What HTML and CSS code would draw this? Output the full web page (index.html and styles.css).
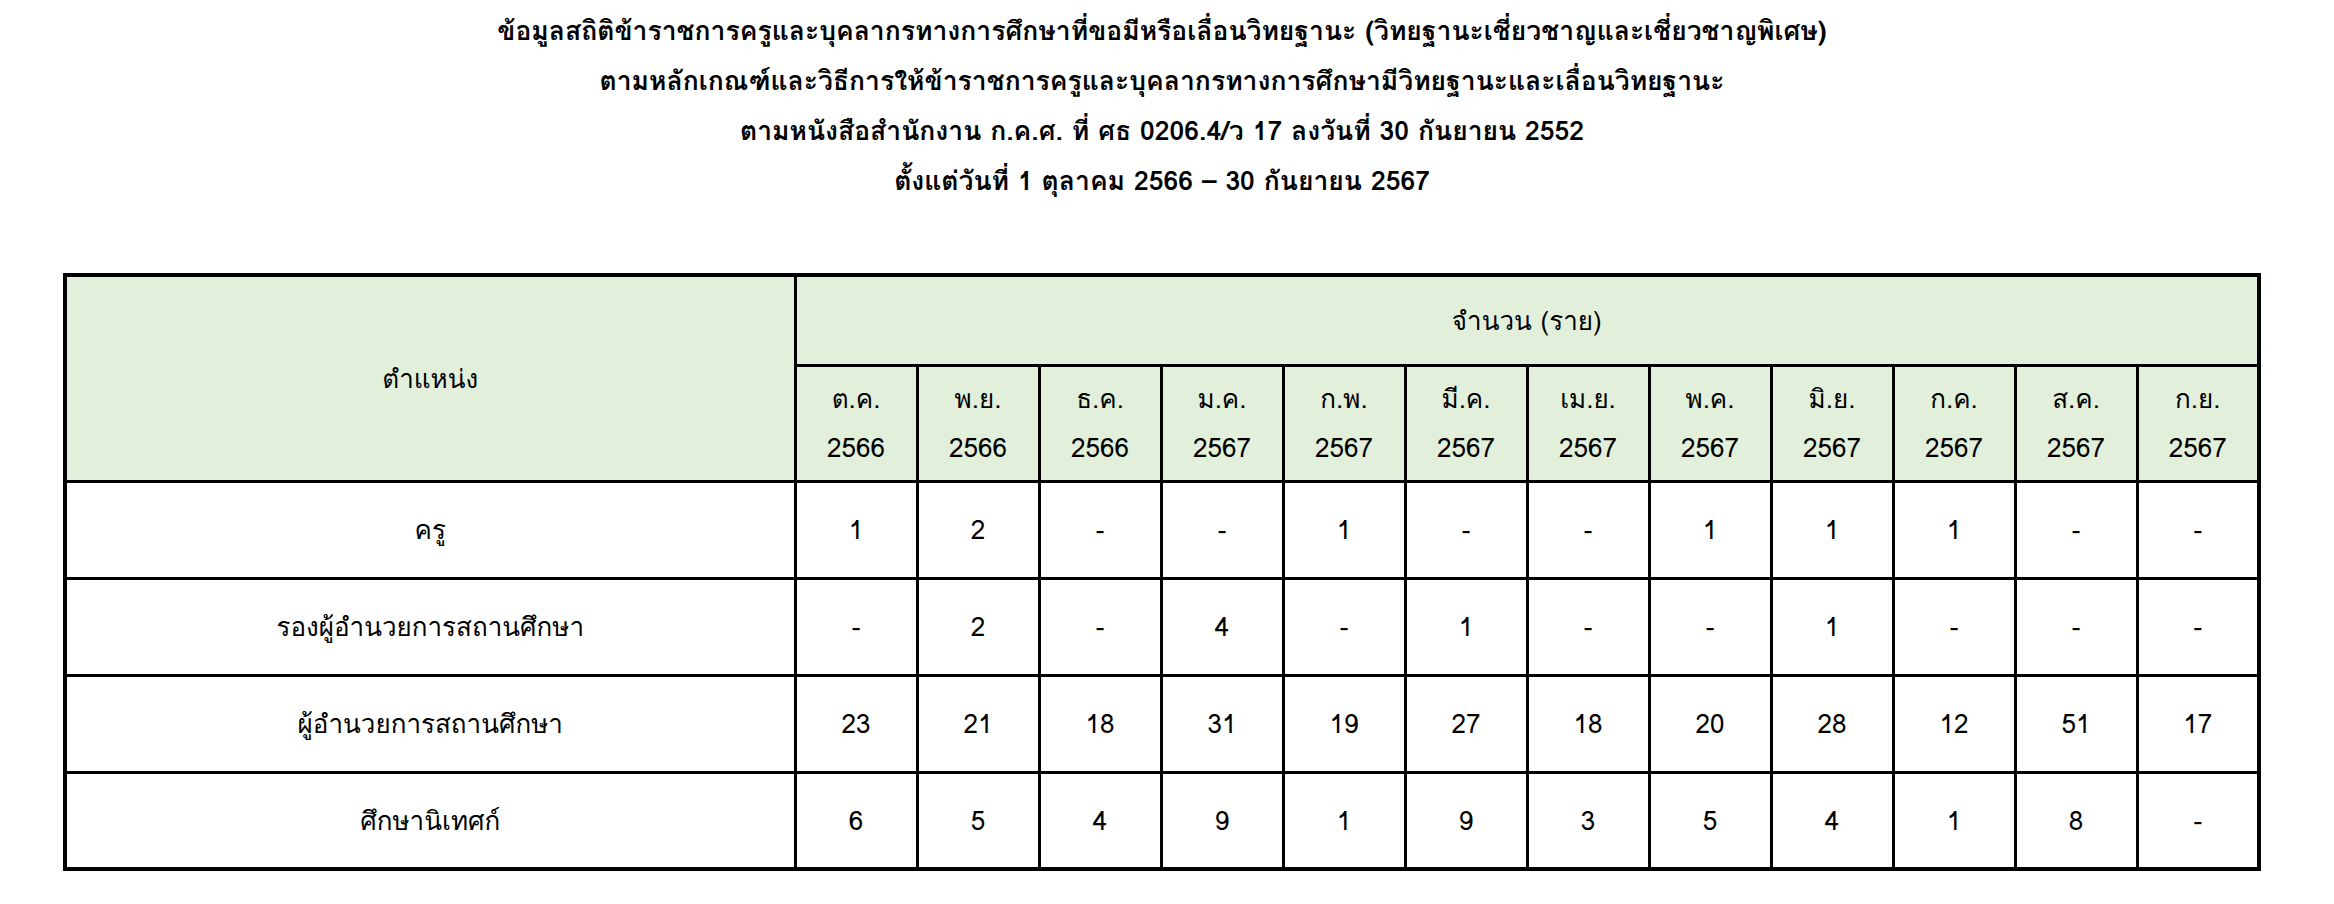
FILE: index.html
```html
<!DOCTYPE html>
<html lang="th">
<head>
<meta charset="utf-8">
<title>ข้อมูลสถิติ</title>
<link rel="stylesheet" href="styles.css">
</head>
<body>
<div class="page">
  <div class="title">
    <div class="title-line">ข้อมูลสถิติข้าราชการครูและบุคลากรทางการศึกษาที่ขอมีหรือเลื่อนวิทยฐานะ (วิทยฐานะเชี่ยวชาญและเชี่ยวชาญพิเศษ)</div>
    <div class="title-line">ตามหลักเกณฑ์และวิธีการให้ข้าราชการครูและบุคลากรทางการศึกษามีวิทยฐานะและเลื่อนวิทยฐานะ</div>
    <div class="title-line">ตามหนังสือสำนักงาน ก.ค.ศ. ที่ ศธ 0206.4/ว 17 ลงวันที่ 30 กันยายน 2552</div>
    <div class="title-line">ตั้งแต่วันที่ 1 ตุลาคม 2566 – 30 กันยายน 2567</div>
  </div>
  <table class="stats">
    <colgroup>
      <col class="col-pos">
      <col span="12" class="col-month">
    </colgroup>
    <thead>
      <tr class="head-1">
        <th rowspan="2" class="pos">ตำแหน่ง</th>
        <th colspan="12">จำนวน (ราย)</th>
      </tr>
      <tr class="head-2">
        <th>ต.ค.<br>2566</th>
        <th>พ.ย.<br>2566</th>
        <th>ธ.ค.<br>2566</th>
        <th>ม.ค.<br>2567</th>
        <th>ก.พ.<br>2567</th>
        <th>มี.ค.<br>2567</th>
        <th>เม.ย.<br>2567</th>
        <th>พ.ค.<br>2567</th>
        <th>มิ.ย.<br>2567</th>
        <th>ก.ค.<br>2567</th>
        <th>ส.ค.<br>2567</th>
        <th>ก.ย.<br>2567</th>
      </tr>
    </thead>
    <tbody>
      <tr>
        <td class="pos">ครู</td>
        <td>1</td><td>2</td><td>-</td><td>-</td><td>1</td><td>-</td><td>-</td><td>1</td><td>1</td><td>1</td><td>-</td><td>-</td>
      </tr>
      <tr>
        <td class="pos">รองผู้อำนวยการสถานศึกษา</td>
        <td>-</td><td>2</td><td>-</td><td>4</td><td>-</td><td>1</td><td>-</td><td>-</td><td>1</td><td>-</td><td>-</td><td>-</td>
      </tr>
      <tr>
        <td class="pos">ผู้อำนวยการสถานศึกษา</td>
        <td>23</td><td>21</td><td>18</td><td>31</td><td>19</td><td>27</td><td>18</td><td>20</td><td>28</td><td>12</td><td>51</td><td>17</td>
      </tr>
      <tr>
        <td class="pos">ศึกษานิเทศก์</td>
        <td>6</td><td>5</td><td>4</td><td>9</td><td>1</td><td>9</td><td>3</td><td>5</td><td>4</td><td>1</td><td>8</td><td>-</td>
      </tr>
    </tbody>
  </table>
</div>
</body>
</html>
```

FILE: styles.css
```css
html, body {
  margin: 0;
  padding: 0;
  background: #ffffff;
}

body {
  font-family: "Tahoma", "Loma", "Garuda", "Noto Sans Thai", "DejaVu Sans", sans-serif;
  color: #000000;
}

.page {
  padding: 6px 0 0 63px;
}

.title {
  width: 2198px;
  text-align: center;
  font-weight: bold;
  font-size: 26.5px;
}

.title-line {
  height: 50px;
  line-height: 50px;
}

.stats {
  margin-top: 67px;
  width: 2198px;
  table-layout: fixed;
  border-collapse: collapse;
  border: 4px solid #000000;
  font-size: 26px;
}

.col-pos {
  width: 730px;
}

.stats th,
.stats td {
  border: 3px solid #000000;
  text-align: center;
  vertical-align: middle;
  padding: 0;
  font-weight: normal;
}

.stats thead th {
  background: #e2efda;
}

.head-1 {
  height: 90px;
}

.head-2 {
  height: 116px;
}

.head-2 th {
  line-height: 49px;
}

.stats tbody tr {
  height: 97px;
}
```
